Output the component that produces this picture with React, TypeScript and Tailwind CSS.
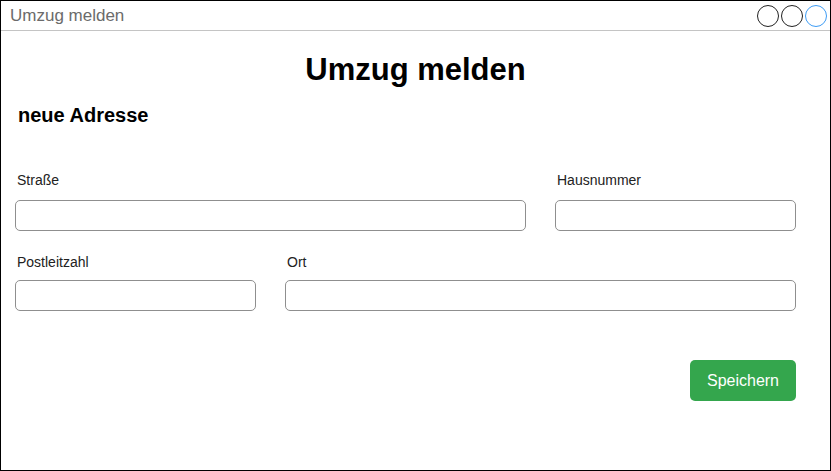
import React from "react";

const Field = ({ label, gap }: { label: string; gap: string }) => (
    <div className="flex flex-col">
        <label className="text-[14px] leading-[16px] text-[#222] pl-[2px]">{label}</label>
        <input
            type="text"
            className={`${gap} h-[31px] w-full rounded-[5px] border border-[#8f8f8f] bg-white px-2 outline-none`}
        />
    </div>
);

export default function App() {
    return (
        <div
            className="w-[831px] h-[471px] border border-black bg-white flex flex-col"
            style={{ fontFamily: '"Liberation Sans", Arial, sans-serif' }}
        >
            <div className="h-[30px] shrink-0 border-b border-[#c4c4c4] flex items-center justify-between pl-[9px] pr-[3px]">
                <span className="text-[17px] text-[#6b6b6b]">Umzug melden</span>
                <div className="flex items-center gap-[2px]">
                    <div className="w-[22px] h-[22px] rounded-full border-[1.5px] border-[#222]" />
                    <div className="w-[22px] h-[22px] rounded-full border-[1.5px] border-[#222]" />
                    <div className="w-[22px] h-[22px] rounded-full border-[1.5px] border-[#3d9cf5]" />
                </div>
            </div>

            <h1 className="mt-[19px] text-center text-[31px] leading-[40px] font-bold text-black">
                Umzug melden
            </h1>

            <div className="pl-[14px] pr-[34px]">
                <h2 className="mt-[13px] pl-[3px] text-[20px] leading-[24px] font-bold text-black">
                    neue Adresse
                </h2>

                <div className="mt-[45px] grid grid-cols-[511px_241px] gap-x-[29px]">
                    <Field label="Straße" gap="mt-[12px]" />
                    <Field label="Hausnummer" gap="mt-[12px]" />
                </div>
                <div className="mt-[23px] grid grid-cols-[241px_511px] gap-x-[29px]">
                    <Field label="Postleitzahl" gap="mt-[10px]" />
                    <Field label="Ort" gap="mt-[10px]" />
                </div>

                <div className="mt-[49px] flex justify-end">
                    <button className="h-[41px] w-[106px] rounded-[5px] bg-[#34a64d] text-[16px] text-white">
                        Speichern
                    </button>
                </div>
            </div>
        </div>
    );
}
